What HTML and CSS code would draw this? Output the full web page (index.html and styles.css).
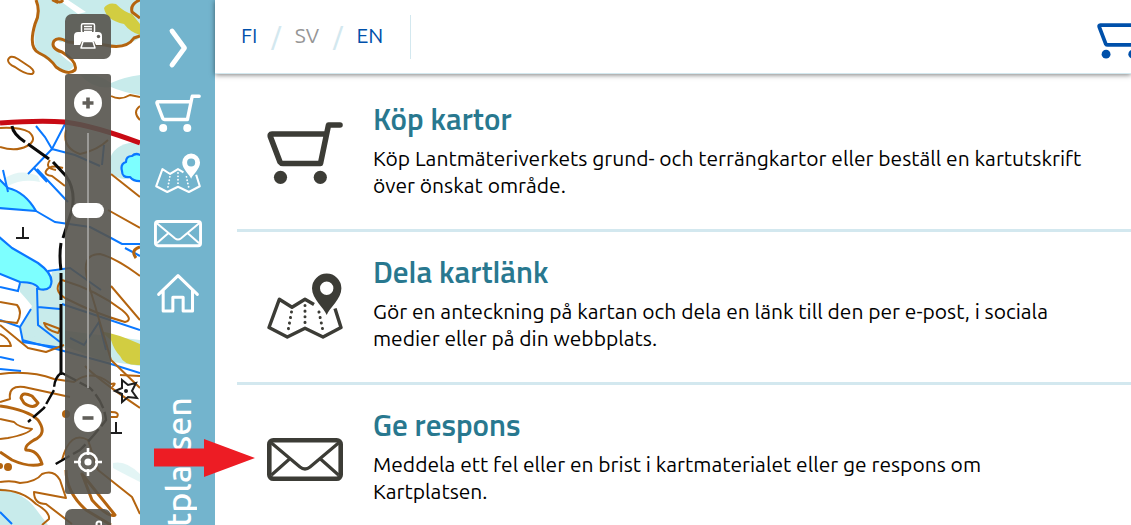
FILE: index.html
```html
<!DOCTYPE html>
<html lang="sv">
<head>
    <meta charset="UTF-8">
    <meta name="viewport" content="width=device-width, initial-scale=1.0">
    <title>Kartplatsen</title>
    <link rel="stylesheet" href="styles.css">
</head>
<body>

<!-- Shared icons -->
<svg class="icon-defs" aria-hidden="true">
    <symbol id="icon-cart" viewBox="0 0 76 76">
        <path d="M58 21H5Q2.500 21 3.500 24L13 49Q14 50.500 16 50.500H53.500L61.500 12H73" fill="none" stroke="currentColor" stroke-width="5.600" stroke-linecap="round" stroke-linejoin="round"/>
        <circle cx="13.500" cy="64.300" r="6.600" fill="currentColor"/>
        <circle cx="53.300" cy="64.300" r="6.600" fill="currentColor"/>
    </symbol>
    <symbol id="icon-map" viewBox="0 0 76 76">
        <path d="M47 38.500L38 33.300L25 41.300L12.300 33.300L2 61.500L20.300 71L38 62.300L56 71L74 61.500L68 42.500" fill="none" stroke="currentColor" stroke-width="3.400" stroke-linejoin="round"/>
        <path d="M24.500 46L21 65M38 39.500V60M52 46L56 65" fill="none" stroke="currentColor" stroke-width="3" stroke-linecap="round" stroke-dasharray="0.100 5.500"/>
        <path fill-rule="evenodd" d="M59.700 49C57 42 45 33 45 22.300a14.700 14.700 0 0 1 29.400 0C74.400 33 62.500 42 59.700 49zM59.700 15.600a6.700 6.700 0 1 0 0 13.400a6.700 6.700 0 0 0 0-13.400z" fill="currentColor"/>
    </symbol>
    <symbol id="icon-mail" viewBox="0 0 76 76">
        <rect x="2.300" y="21.300" width="71.400" height="38.400" rx="4" fill="none" stroke="currentColor" stroke-width="4.600"/>
        <path d="M4.500 24L33 48Q38 52 43 48L71.500 24M4.500 56L22.500 40M53.500 40L71.500 56" fill="none" stroke="currentColor" stroke-width="3.200"/>
    </symbol>
    <symbol id="icon-home" viewBox="0 0 76 76">
        <path d="M6 42L38 11L70 42M13.500 36V69.500H29.500V46.500H46.500V69.500H62V36" fill="none" stroke="currentColor" stroke-width="5" stroke-linecap="round" stroke-linejoin="round"/>
    </symbol>
</svg>

<div class="app">
    <div class="map">
        <svg class="map-canvas" viewBox="0 0 140 525" preserveAspectRatio="xMinYMin slice" aria-hidden="true">
            <rect width="140" height="525" fill="#fff"/>
            <!-- Wetlands -->
            <g fill="#c8ebeb">
                <path d="M37 0H140V38Q128 46 112 45L60 42Q53 36 53 45Q60 56 74 65Q70 74 60 69L36 52Q32 34 38 18z"/>
                <path d="M80 75Q96 72 111 83Q124 77 140 75V95Q122 92 111 87Q94 90 80 75z"/>
                <path d="M110 158Q116 142 140 142V172Q124 186 110 172z"/>
                <path d="M5 178Q20 168 38 176L40 182Q22 178 8 186z" opacity="0.500"/>
                <path d="M20 283Q40 282 48 289L52 272L65 268V348L22 341L20 328Q28 314 32 306Q24 296 20 292z"/>
                <path d="M22 340L62 345L100 360L140 366V340L60 330z"/>
                <path d="M0 488Q25 494 35 508L48 525H0z"/>
                <path d="M113 463Q126 460 140 474V482Q124 474 113 468z" opacity="0.500"/>
            </g>
            <path d="M59 0L78 14L86 12L68 0z" fill="#fff"/>
            <path d="M104 8Q108 2 116 4Q124 12 132 14L140 24V35Q130 32 124 24Q106 20 104 8z" fill="#d2cd41"/>
            <path d="M100 331Q118 334 140 344V365Q124 366 120 356Q114 350 111 340z" fill="#d2cd41"/>
            <!-- Lakes -->
            <g fill="#7dffff" stroke="#0a78ff" stroke-width="2.200" stroke-linejoin="round">
                <path d="M-2 178L8 188Q25 192 36 211L-2 208z"/>
                <path d="M-2 236L12 248L38 263Q56 276 50 287Q46 291 39 289Q36 282 20 282L-2 273z"/>
                <path d="M142 156Q136 152 132 156Q126 156 126 162Q120 164 122 171Q122 178 130 177Q134 182 142 181z"/>
            </g>
            <!-- Streams -->
            <g fill="none" stroke="#0a78ff" stroke-width="2">
                <path d="M36 126L45 137L52 149L65 124M52 149L28 174M52 149L75 155L100 166M34 168L47 182M3 170L8 192"/>
                <path d="M37 169L68 202M36 211L55 222L90 227L111 238L122 244H140M125 248L140 256"/>
                <path d="M48 271L70 268L101 290M37 288L38 325L60 342M0 287L18 291L20 283M38 307L60 309M31 309L20 327L23 342L62 348"/>
                <path d="M0 320L20 327M62 304L140 330M70 338L84 345L99 322L106 350M22 340L60 350L111 364L140 373M0 357L14 360M0 369L21 371M0 512L12 524M102 165L104 145"/>
            </g>
            <!-- Contour lines -->
            <g fill="none" stroke="#b4640f" stroke-width="2" stroke-linejoin="round">
                <path d="M8 60Q10 54 18 59L30 67Q36 72 32 74Q26 75 15 67Q8 64 8 60zM0 147Q16 152 27 146Q38 140 29 132Q20 127 0 128"/>
                <path d="M63 168Q50 164 46 171Q44 175 52 176L65 186M50 160Q44 168 56 170M52 0L58 3"/>
                <path d="M111 96Q120 101 130 95L140 97M111 174L140 197M108 210L140 228M140 106Q132 112 140 120M66 130Q62 148 80 154Q98 150 108 140"/>
                <path d="M140 388L111 360L88 282Q80 254 100 254Q116 258 140 276M62 280Q52 290 65 298Q96 314 125 322Q134 320 122 310Q96 290 62 280M111 286L140 320"/>
                <path d="M0 302L17 305Q23 312 17 323L0 321M44 323L60 329L58 333Q46 330 44 323zM0 325L28 348L46 352L64 345M0 334Q9 338 11 346L0 346"/>
                <path d="M0 374Q30 370 54 379L74 382Q92 368 111 384Q118 382 112 387M0 402L10 399Q8 385 24 387L70 397M0 419L14 422Q18 427 32 429Q28 434 8 438L0 439M111 412Q120 412 117 417L111 417"/>
                <path d="M0 482Q12 480 20 483Q36 482 42 474Q54 469 60 480L66 498L34 492Q34 504 46 504L72 524M62 460Q70 430 88 440L98 470L132 497L140 514M0 490Q22 490 36 504Q50 512 49 519L42 525"/>
                <path d="M85 366Q96 378 140 408M120 375L140 376"/>
            </g>
            <g fill="none" stroke="#b4640f" stroke-width="3" stroke-linejoin="round">
                <path d="M36 0Q41 12 35 24Q28 48 39 53Q50 58 56 67Q68 76 75 70Q78 62 62 52Q50 48 54 41Q58 36 68 42L105 45Q126 50 134 38L140 36M55 0Q60 4 63 0M140 0Q130 4 132 12L140 18"/>
                <path d="M0 406Q28 410 38 420Q48 434 34 440Q24 446 26 450Q38 450 42 464Q30 468 12 460L0 452M21 398Q22 391 32 396L38 403Q34 410 24 403zM66 470Q66 492 86 510L111 525M82 474L115 515Q108 518 92 500zM140 247Q130 250 136 258"/>
            </g>
            <circle cx="8" cy="467" r="4" fill="#b4640f"/>
            <circle cx="0" cy="466" r="3" fill="#b4640f"/>
            <circle cx="66" cy="414" r="4" fill="#b4640f"/>
            <!-- Main road -->
            <path d="M0 123Q40 120 65 122Q95 126 140 143" fill="none" stroke="#c80a14" stroke-width="5"/>
            <!-- Tracks -->
            <g fill="none" stroke="#0a0a0a" stroke-width="3">
                <path d="M12 126Q13 134 25 142M28 144L49 159M53 162L66 176Q76 190 72 210L63 238M61 243Q59 256 61 270M61 273V300M61 304V375"/>
            </g>
            <g fill="none" stroke="#0a0a0a" stroke-width="2.400">
                <path d="M61 373Q54 378 54 390L44 408L28 422" stroke-dasharray="16 3"/>
                <path d="M62 373L90 388Q104 402 106 420Q94 436 80 450L54 465" stroke-dasharray="16 4"/>
            </g>
            <g fill="none" stroke="#1e1e1e" stroke-width="2">
                <path d="M23 227V238M16 238H29M116 422V433M110 433H122"/>
                <path d="M122 380L128 385L136 383L132 391L137 398L128 397L122 402L122 394L115 391L122 388z"/>
            </g>
            <circle cx="126" cy="391" r="2" fill="#1e1e1e"/>
        </svg>

        <div class="map-tools">
            <button class="tool-button" type="button" aria-label="Skriv ut">
                <svg width="28" height="28" viewBox="0 0 28 28">
                    <path d="M4 9H24Q28 9 28 13V22H22L20 18H8L6 22H0V13Q0 9 4 9z" fill="#fff"/>
                    <rect x="7.500" y="0.800" width="13" height="9" rx="1.500" fill="#615f5a" stroke="#fff" stroke-width="1.500"/>
                    <path d="M10 3.500H18M10 6H18M10 8.500H18" stroke="#fff" stroke-width="1.300"/>
                    <path d="M9 18.500H19L21 25H7z" fill="#615f5a" stroke="#fff" stroke-width="1.500" stroke-linejoin="round"/>
                    <circle cx="24.500" cy="13.500" r="1.700" fill="#615f5a"/>
                </svg>
            </button>
            <div class="zoom-panel">
                <button class="zoom-button" type="button" aria-label="Zooma in">
                    <svg width="28" height="28" viewBox="0 0 28 28">
                        <circle cx="14" cy="14" r="14" fill="#fff"/>
                        <path d="M14 8.500V19.500M8.500 14H19.500" stroke="#615f5a" stroke-width="3.600"/>
                    </svg>
                </button>
                <input class="zoom-slider" type="range" min="0" max="100" value="29" aria-label="Zoomnivå">
                <button class="zoom-button" type="button" aria-label="Zooma ut">
                    <svg width="28" height="28" viewBox="0 0 28 28">
                        <circle cx="14" cy="14" r="14" fill="#fff"/>
                        <path d="M8.500 14H19.500" stroke="#615f5a" stroke-width="3.600"/>
                    </svg>
                </button>
                <button class="zoom-button" type="button" aria-label="Min position">
                    <svg width="28" height="28" viewBox="0 0 28 28">
                        <circle cx="14" cy="14" r="9" fill="none" stroke="#fff" stroke-width="2.600"/>
                        <circle cx="14" cy="14" r="3.600" fill="#fff"/>
                        <path d="M14 0V7M14 21V28M0 14H7M21 14H28" stroke="#fff" stroke-width="2.600"/>
                    </svg>
                </button>
            </div>
            <button class="tool-button" type="button" aria-label="Mät">
                <svg width="28" height="28" viewBox="0 0 28 28" fill="none" stroke="#fff" stroke-width="2">
                    <circle cx="25" cy="6" r="2.500"/>
                    <path d="M23 8L6 20"/>
                    <circle cx="4" cy="21" r="2.500"/>
                </svg>
            </button>
        </div>
    </div>

    <nav class="sidebar">
        <button class="side-button side-toggle" type="button" aria-label="Stäng panelen">
            <svg width="46" height="46" viewBox="0 0 46 46">
                <path d="M17 6L29.500 23L17 40" fill="none" stroke="#fff" stroke-width="4.800" stroke-linecap="round" stroke-linejoin="round"/>
            </svg>
        </button>
        <a class="side-button" href="#kop" aria-label="Köp kartor"><svg width="48" height="46" viewBox="0 0 76 76"><use href="#icon-cart"/></svg></a>
        <a class="side-button" href="#dela" aria-label="Dela kartlänk"><svg width="48" height="46" viewBox="0 0 76 76"><use href="#icon-map"/></svg></a>
        <a class="side-button" href="#respons" aria-label="Ge respons"><svg width="48" height="46" viewBox="0 2 76 72"><use href="#icon-mail" width="76" height="76"/></svg></a>
        <a class="side-button" href="#hem" aria-label="Hem"><svg width="48" height="46" viewBox="0 0 76 76"><use href="#icon-home"/></svg></a>
        <span class="side-title">Kartplatsen</span>
    </nav>

    <main class="panel">
        <header class="panel-header">
            <div class="languages">
                <a href="#fi">FI</a>
                <span class="slash">/</span>
                <span class="current">SV</span>
                <span class="slash">/</span>
                <a href="#en">EN</a>
            </div>
            <a class="header-cart" href="#varukorg" aria-label="Varukorg"><svg width="51" height="51"><use href="#icon-cart"/></svg></a>
        </header>

        <div class="services">
            <section class="service" id="kop">
                <svg class="service-icon"><use href="#icon-cart"/></svg>
                <div class="service-text">
                    <h2>Köp kartor</h2>
                    <p>Köp Lantmäteriverkets grund- och terrängkartor eller beställ en kartutskrift över önskat område.</p>
                </div>
            </section>
            <section class="service" id="dela">
                <svg class="service-icon"><use href="#icon-map"/></svg>
                <div class="service-text">
                    <h2>Dela kartlänk</h2>
                    <p>Gör en anteckning på kartan och dela en länk till den per e-post, i sociala medier eller på din webbplats.</p>
                </div>
            </section>
            <section class="service" id="respons">
                <svg class="service-icon"><use href="#icon-mail"/></svg>
                <div class="service-text">
                    <h2>Ge respons</h2>
                    <p>Meddela ett fel eller en brist i kartmaterialet eller ge respons om Kartplatsen.</p>
                </div>
                <svg class="pointer" viewBox="0 0 101 40" aria-hidden="true">
                    <path d="M0 10.500H50V1L101 20L50 39V28.500H0z" fill="#ed1c24"/>
                </svg>
            </section>
        </div>
    </main>
</div>

</body>
</html>
```

FILE: styles.css
```css
* {
    box-sizing: border-box;
}

body {
    margin: 0;
    font-family: 'Ubuntu', 'Noto Sans', sans-serif;
    font-size: 21px;
    line-height: 27px;
    color: #000;
    background-color: #fff;
}

h2, p {
    margin: 0;
}

button {
    border: none;
    padding: 0;
    background: none;
    cursor: pointer;
}

a {
    color: #0050aa;
    text-decoration: none;
}

svg {
    display: block;
}

.icon-defs {
    display: none;
}

.app {
    display: flex;
    height: 100vh;
    overflow: hidden;
}

/* Map */
.map {
    position: relative;
    flex: 0 0 140px;
    overflow: hidden;
}

.map-canvas {
    width: 100%;
    height: 100%;
}

.map-tools {
    position: absolute;
    top: 14px;
    left: 65px;
    display: flex;
    flex-direction: column;
    gap: 15px;
    width: 46px;
}

.tool-button, .zoom-panel {
    display: flex;
    align-items: center;
    background-color: rgba(85, 83, 77, 0.9);
}

.tool-button {
    justify-content: center;
    height: 45px;
    border-radius: 7px;
}

.zoom-panel {
    flex-direction: column;
    gap: 16px;
    padding: 15px 0 18px;
    border-radius: 3px;
}

.zoom-slider {
    appearance: none;
    writing-mode: vertical-lr;
    width: 32px;
    height: 255px;
    margin: 0;
    background: linear-gradient(#9b9a97, #9b9a97) center / 2px 100% no-repeat;
}

.zoom-slider::-webkit-slider-thumb {
    appearance: none;
    width: 32px;
    height: 15px;
    border-radius: 8px;
    background-color: #fff;
}

/* Sidebar */
.sidebar {
    display: flex;
    flex: 0 0 75px;
    flex-direction: column;
    align-items: center;
    gap: 14px;
    padding-top: 25px;
    overflow: hidden;
    background-color: #73b4cd;
}

.side-button {
    color: #fff;
}

.side-toggle {
    margin-bottom: 4px;
}

.side-title {
    margin-top: 68px;
    font-size: 34px;
    font-weight: 500;
    line-height: 40px;
    color: #fff;
    writing-mode: vertical-rl;
    transform: rotate(180deg);
}

/* Panel */
.panel {
    flex: 1;
    min-width: 0;
}

.panel-header {
    position: relative;
    display: flex;
    align-items: center;
    justify-content: space-between;
    height: 74px;
    padding-left: 26px;
    border-bottom: 1px solid #d3e8ef;
    background-color: #fff;
    box-shadow: 0 1px 5px rgba(0, 0, 0, 0.5);
}

.languages {
    display: flex;
    align-items: center;
    gap: 14px;
    height: 44px;
    padding-right: 27px;
    border-right: 1px solid #d3e8ef;
}

.languages a, .languages .current {
    padding-bottom: 2px;
}

.languages .slash {
    font-size: 24px;
    font-weight: 500;
    color: #d3e8ef;
}

.languages .current {
    color: #969696;
}

.header-cart {
    margin-right: -17px;
}

.services {
    padding: 5px 0 0 22px;
}

.service {
    position: relative;
    display: flex;
    align-items: flex-start;
    gap: 30px;
    padding: 22px 40px 30px 30px;
    border-bottom: 3px solid #d3e8ef;
}

.service-icon {
    flex: 0 0 76px;
    height: 76px;
    margin-top: 12px;
    color: #3c3c36;
}

.service h2 {
    margin-bottom: 8px;
    font-family: 'Titillium Web', 'Noto Sans', sans-serif;
    font-size: 31px;
    font-weight: 600;
    line-height: 36px;
    color: #28788f;
}

/* Arrow laid over the sidebar edge */
.pointer {
    position: absolute;
    top: 53px;
    left: -83px;
    width: 101px;
    height: 40px;
}
```
